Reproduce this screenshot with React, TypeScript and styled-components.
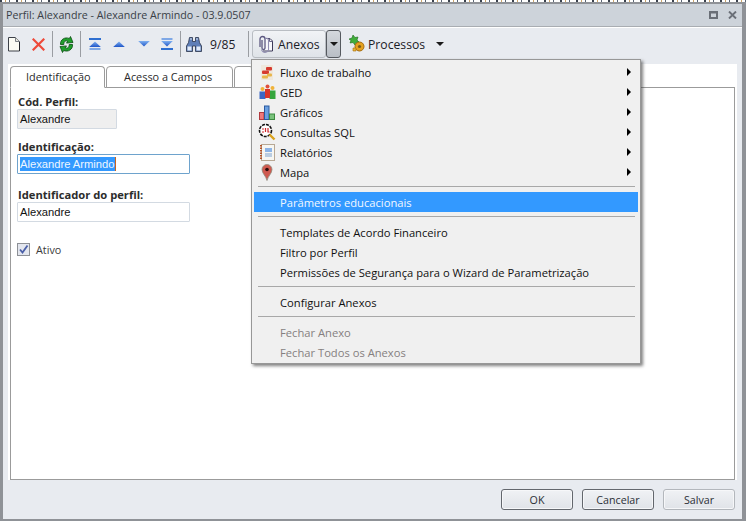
import { ReactNode } from "react";
import styled, { createGlobalStyle } from "styled-components";

const GlobalStyle = createGlobalStyle`
    html, body {
        margin: 0;
        padding: 0;
        width: 746px;
        height: 521px;
        overflow: hidden;
    }
    * {
        box-sizing: border-box;
    }
`;

const font = `"Open Sans", "Noto Sans", "Liberation Sans", sans-serif`;

const Desktop = styled.div`
    position: relative;
    width: 746px;
    height: 521px;
    display: flex;
    flex-direction: column;
    background: #8f9297;
    font-family: ${font};
    font-size: 11.2px;
    color: #1d1d1d;
`;

const BehindStrip = styled.div`
    height: 4px;
    flex: none;
    background:
        repeating-linear-gradient(90deg, #39414d 0 2px, #fff 2px 5px, #c9a36a 5px 6px, #fff 6px 9px, #5a6575 9px 10px, #fff 10px 16px) 0 0 / 100% 2px no-repeat,
        #8f9297;
`;

const Window = styled.div`
    flex: 1;
    margin: 0 4px 2px 3px;
    display: flex;
    flex-direction: column;
    background: #e8ebf0;
    min-height: 0;
`;

const TitleBar = styled.div`
    height: 23px;
    flex: none;
    display: flex;
    align-items: center;
    justify-content: space-between;
    padding: 0 5px 0 3px;
    background: #cdd3da;
    border-bottom: 1px solid #a9adb2;
    color: #3a3f47;
    font-size: 10.7px;
`;

const WindowControls = styled.div`
    display: flex;
    align-items: center;
    gap: 10px;
`;

const Toolbar = styled.div`
    height: 37px;
    flex: none;
    display: flex;
    align-items: center;
    border-top: 1px solid #fff;
    padding: 0 0 4px 5px;
`;

const ToolIcon = styled.span<{ $width: number; $gap?: number }>`
    width: ${(p) => p.$width}px;
    margin-right: ${(p) => p.$gap ?? 0}px;
    height: 24px;
    flex: none;
    display: flex;
    align-items: center;
    justify-content: center;
`;

const ToolDivider = styled.span<{ $left: number; $right: number }>`
    width: 1px;
    height: 26px;
    flex: none;
    margin: 0 ${(p) => p.$right}px 0 ${(p) => p.$left}px;
    background: #9a9da2;
`;

const Counter = styled.span`
    width: 27px;
    margin: 0 11px 0 8px;
    font-size: 12.2px;
    color: #1c2027;
    flex: none;
`;

const SplitMain = styled.div`
    width: 74px;
    height: 28px;
    flex: none;
    display: flex;
    align-items: center;
    gap: 5px;
    padding-left: 5px;
    border: 1px solid #b9bdc3;
    border-radius: 3px;
    background: linear-gradient(#f1f3f6, #dfe3e8);
    font-size: 12.2px;
    color: #1c2027;
`;

const SplitArrow = styled.div`
    width: 15px;
    height: 28px;
    flex: none;
    display: flex;
    align-items: center;
    justify-content: center;
    border: 1px solid #55595f;
    border-radius: 3px;
    background: linear-gradient(#d4d8dd, #b9bec5);
`;

const PlainTool = styled.div`
    margin-left: 7px;
    display: flex;
    align-items: center;
    gap: 2px;
    font-size: 12.2px;
    color: #1c2027;
`;

const Caret = styled.span<{ $gap?: number }>`
    width: 0;
    height: 0;
    margin-left: ${(p) => p.$gap ?? 0}px;
    border-left: 4px solid transparent;
    border-right: 4px solid transparent;
    border-top: 4px solid #1a1a1a;
`;

const TabSheet = styled.div`
    flex: 1;
    min-height: 0;
    margin: 0 5px;
    background: #fff;
    padding: 2px 2px 0;
    display: flex;
    flex-direction: column;
`;

const TabStrip = styled.div`
    height: 22px;
    flex: none;
    display: flex;
    position: relative;
    margin-bottom: -1px;
`;

const Tab = styled.div<{ $active?: boolean; $width: number }>`
    width: ${(p) => p.$width}px;
    margin-right: 1px;
    height: 22px;
    flex: none;
    display: flex;
    align-items: center;
    padding: 0 0 2px ${(p) => (p.$active ? 15 : 17)}px;
    font-size: 10.9px;
    background: #fff;
    border: 1px solid #9b9b9b;
    border-bottom: ${(p) => (p.$active ? "1px solid #fff" : "1px solid #9b9b9b")};
    border-radius: 4px 4px 0 0;
    color: #2a2a2a;
    white-space: nowrap;
    overflow: hidden;
`;

const TabPanel = styled.div`
    flex: 1;
    min-height: 0;
    border: 1px solid #9b9b9b;
    padding: 7px 0 0 6px;
    display: flex;
    flex-direction: column;
    align-items: flex-start;
`;

const FieldLabel = styled.label<{ $top?: number }>`
    margin: ${(p) => p.$top ?? 0}px 0 0 1px;
    height: 14px;
    line-height: 14px;
    font-weight: 700;
    font-size: 11.2px;
    color: #2c2c2c;
`;

const TextBox = styled.div<{ $width: number; $tone?: "readonly" | "focus" }>`
    width: ${(p) => p.$width}px;
    height: 20px;
    padding-left: 2px;
    display: flex;
    align-items: center;
    font-family: "Liberation Sans", Arial, sans-serif;
    font-size: 11.2px;
    color: #111;
    background: ${(p) => (p.$tone === "readonly" ? "#efefef" : "#fff")};
    border: 1px solid ${(p) => (p.$tone === "focus" ? "#6ea3cd" : "#d3dae2")};
    border-radius: 1px;
`;

const Selected = styled.span`
    background: #3399ff;
    color: #eef6ff;
    height: 14px;
    line-height: 14px;
    border-right: 1px solid #c8641e;
`;

const CheckRow = styled.div`
    margin-top: 20px;
    display: flex;
    align-items: center;
    gap: 6px;
    color: #3b3b3b;
    font-size: 10.8px;
`;

const CheckBox = styled.span`
    width: 13px;
    height: 13px;
    display: flex;
    align-items: center;
    justify-content: center;
    border: 1px solid #8d9096;
    background: #e3e6ee;
`;

const Footer = styled.div`
    height: 39px;
    flex: none;
    display: flex;
    justify-content: flex-end;
    align-items: flex-start;
    gap: 9px;
    padding: 9px 7px 0 0;
`;

const DialogButton = styled.div<{ $muted?: boolean }>`
    width: 72px;
    height: 21px;
    display: flex;
    align-items: center;
    justify-content: center;
    font-size: 10.7px;
    border: 1px solid ${(p) => (p.$muted ? "#b3b7bc" : "#63676d")};
    border-radius: 3px;
    background: linear-gradient(#f0f2f5, #e0e3e8);
    color: #2b2f36;
    box-shadow: inset 0 0 0 1px #f6f7f9;
`;

const Menu = styled.div`
    position: absolute;
    z-index: 2;
    left: 251px;
    top: 59px;
    width: 390px;
    height: 305px;
    padding: 2px;
    background: #f0f0f0;
    border: 1px solid #979797;
    box-shadow: 2px 2px 3px rgba(60, 60, 60, 0.65);
    color: #101010;
`;

const MenuItem = styled.div<{ $highlight?: boolean; $disabled?: boolean }>`
    height: 20px;
    display: flex;
    align-items: center;
    padding: 0 7px 0 3px;
    background: ${(p) => (p.$highlight ? "#3399ff" : "transparent")};
    color: ${(p) => (p.$highlight ? "#f2f8ff" : p.$disabled ? "#857f7f" : "#101010")};
`;

const MenuIcon = styled.span`
    width: 20px;
    height: 20px;
    flex: none;
    display: flex;
    align-items: center;
    justify-content: center;
`;

const MenuLabel = styled.span`
    margin-left: 3px;
    flex: 1;
`;

const MenuArrow = styled.span`
    width: 0;
    height: 0;
    border-top: 4px solid transparent;
    border-bottom: 4px solid transparent;
    border-left: 4px solid #000;
`;

const MenuRule = styled.div`
    height: 10px;
    padding: 4px 3px 0 4px;
    &::before {
        content: "";
        display: block;
        height: 1px;
        background: #a8a8a8;
    }
`;

const NewDocIcon = () => (
    <svg width="12" height="16" viewBox="0 0 12 16">
        <path d="M.5 1.500h7l4 4v9.500H.5z" fill="#fbfbf4" stroke="#3d4149" />
        <path d="M7.500 1.500v4h4" fill="#e4e4dc" stroke="#7b7f85" />
        <path d="M11.500 6v9" stroke="#23262c" />
    </svg>
);

const DeleteIcon = () => (
    <svg width="13" height="13" viewBox="0 0 13 13">
        <path d="M1.500 1.500l10 10M11.500 1.500l-10 10" stroke="#ee4a3a" strokeWidth="2.200" strokeLinecap="square" />
    </svg>
);

const RefreshIcon = () => (
    <svg width="15" height="17" viewBox="0 0 15 17">
        <path d="M1.500 8.500C1 3.500 6 .6 10.300 2.500L11.500.5l2.500 6-6.500.6 1.200-2C6.500 4.200 4.800 5.600 4.800 8.500z" fill="#1fa02b" stroke="#0a4a12" strokeWidth=".8" />
        <path d="M13.500 8.500c.5 5-4.500 7.900-8.800 6L3.500 16.500 1 10.500l6.500-.6-1.200 2c2.200.9 3.900-.5 3.900-3.400z" fill="#1fa02b" stroke="#0a4a12" strokeWidth=".8" />
    </svg>
);

const NavIcon = ({ dir, bar }: { dir: "up" | "down"; bar?: boolean }) => (
    <svg width="14" height="14" viewBox="0 0 14 14">
        <defs>
            <linearGradient id={`nav-${dir}`} x1="0" y1="0" x2="0" y2="1">
                <stop offset="0" stopColor="#7fb0f0" />
                <stop offset="1" stopColor="#1f55c8" />
            </linearGradient>
        </defs>
        {dir === "up" ? (
            <>
                {bar && <rect x="1" y="1" width="12" height="2" fill="#2f6fd0" />}
                <path d="M7 4.500l5.800 5.500H1.200z" fill={`url(#nav-${dir})`} />
                {bar && <path d="M1.500 12h11" stroke="#7fa8e6" strokeWidth="2" />}
            </>
        ) : (
            <>
                {bar && <path d="M1.500 2h11" stroke="#7fa8e6" strokeWidth="2" />}
                <path d="M1.200 4h11.600L7 9.500z" fill={`url(#nav-${dir})`} />
                {bar && <rect x="1" y="11" width="12" height="2" fill="#2f6fd0" />}
            </>
        )}
    </svg>
);

const BinocularsIcon = () => (
    <svg width="16" height="15" viewBox="0 0 16 15">
        <path d="M3.500.5h3v4h3v-4h3l1 5 2 3.500v5.500h-6V9h-3v5.500H.5V9l2-3.500z" fill="#5f7fb8" stroke="#28324a" strokeWidth=".8" />
        <rect x="1.500" y="9.500" width="4" height="4" fill="#e3ecf8" />
        <rect x="10.500" y="9.500" width="4" height="4" fill="#e3ecf8" />
        <path d="M4 2h2M10 2h2" stroke="#d7e1f2" />
    </svg>
);

const ClipIcon = () => (
    <svg width="15" height="20" viewBox="0 0 15 20">
        <path d="M7 4.500h5l2.500 2.500v10H5" fill="#f8f8fc" stroke="#3c3a58" />
        <path d="M11.500 4.500v3h3" fill="none" stroke="#6a688a" />
        <path d="M2 13V5a2.500 2.500 0 0 1 5 0v9a1.500 1.500 0 0 1-3 0V6" fill="none" stroke="#5c5880" strokeWidth="1.300" />
        <path d="M7 5a2 2 0 0 1 3.500 1v8a3.500 3.500 0 0 1-7 1.500" fill="none" stroke="#8f8cb0" strokeWidth="1.100" />
    </svg>
);

const ProcessIcon = () => (
    <svg width="18" height="18" viewBox="0 0 18 18">
        <path d="M1 4l3-1 1-3 2 2.500L10 2 9 5l2 2-3 .5L7 10 5 7.500 2 8l1-2.500z" fill="#3fae3a" stroke="#1c6a1c" strokeWidth=".6" />
        <circle cx="11.500" cy="11.500" r="4.500" fill="#e4a11f" stroke="#a56b0c" />
        <circle cx="11.500" cy="11.500" r="1.600" fill="#7a5a1a" />
        <path d="M5 13h3v3H5z" fill="#e8b63a" stroke="#a56b0c" strokeWidth=".6" />
    </svg>
);

const FlowIcon = () => (
    <svg width="16" height="17" viewBox="0 0 16 17">
        <path d="M2 1h12v15H2z" fill="#efe8dc" />
        <rect x="7" y="3" width="6" height="3.500" rx="1" fill="#d63a2e" />
        <rect x="3" y="6.500" width="7" height="3.500" rx="1" fill="#d63a2e" />
        <rect x="8" y="9.500" width="5" height="3" rx="1" fill="#e8b54a" />
        <rect x="3" y="11.500" width="6" height="3" rx="1" fill="#e8b54a" />
    </svg>
);

const GedIcon = () => (
    <svg width="17" height="16" viewBox="0 0 17 16">
        <circle cx="3.500" cy="5" r="2" fill="#f0b33a" />
        <path d="M.5 7.500h6V15h-6z" fill="#3b66c4" />
        <circle cx="13.500" cy="4" r="2" fill="#f0b33a" />
        <path d="M10.500 6.500h6V15h-6z" fill="#35a63e" />
        <circle cx="8.500" cy="2.500" r="2" fill="#e0503c" />
        <path d="M6 5h5v9H6z" fill="#d8342a" />
    </svg>
);

const ChartIcon = () => (
    <svg width="16" height="15" viewBox="0 0 16 15">
        <rect x=".5" y="7.500" width="4.500" height="7" fill="#f0787a" stroke="#b23a3e" />
        <rect x="5.500" y="1" width="4.500" height="13.500" fill="#6a9fe0" stroke="#2a5aa0" />
        <rect x="10.500" y="9" width="5" height="5.500" fill="#79c27c" stroke="#3c8a40" />
    </svg>
);

const SqlIcon = () => (
    <svg width="18" height="18" viewBox="0 0 18 18">
        <circle cx="7.500" cy="7.500" r="6" fill="#fff" stroke="#111" strokeWidth="1.600" strokeDasharray="3 1" />
        <path d="M4 6h2M6 9H4M7.500 5v4M10 5v4h1.500" stroke="#d0262a" strokeWidth="1.200" fill="none" />
        <path d="M11.500 11.500l5 5" stroke="#d9a21c" strokeWidth="2.400" />
    </svg>
);

const ReportIcon = () => (
    <svg width="15" height="17" viewBox="0 0 15 17">
        <rect x="1.500" y=".5" width="13" height="16" fill="#f6f6f2" stroke="#b8a894" />
        <path d="M1 1v15" stroke="#b3552a" strokeWidth="2" strokeDasharray="1.500 1" />
        <path d="M5 4h7v4H5z" fill="#8db4e6" />
        <path d="M5 10h7M5 12h7" stroke="#7fa3d0" />
    </svg>
);

const PinIcon = () => (
    <svg width="12" height="17" viewBox="0 0 12 17">
        <path d="M6 16.500C5 12 1 9.500 1 5.500a5 5 0 0 1 10 0C11 9.500 7 12 6 16.500z" fill="#cf5a50" stroke="#8f8f80" strokeWidth=".8" />
        <circle cx="6" cy="5.500" r="1.800" fill="#2a0d0d" />
    </svg>
);

const MaximizeIcon = () => (
    <svg width="9" height="8" viewBox="0 0 9 8">
        <path d="M0 0h9v8H0z M2 2.500v3.500h5V2.500z" fill="#6a6f77" fillRule="evenodd" />
    </svg>
);

const CloseIcon = () => (
    <svg width="9" height="8" viewBox="0 0 9 8">
        <path d="M1 .5L8 7.500M8 .5L1 7.500" stroke="#6a6f77" strokeWidth="1.900" />
    </svg>
);

const CheckMark = () => (
    <svg width="11" height="11" viewBox="0 0 11 11">
        <path d="M2 5.500l2.500 3L9.500 1.500" fill="none" stroke="#4a5fa8" strokeWidth="1.800" />
    </svg>
);

type MenuEntry =
    | { rule: true }
    | { label: string; icon?: ReactNode; sub?: boolean; highlight?: boolean; disabled?: boolean };

const menuEntries: MenuEntry[] = [
    { label: "Fluxo de trabalho", icon: <FlowIcon />, sub: true },
    { label: "GED", icon: <GedIcon />, sub: true },
    { label: "Gráficos", icon: <ChartIcon />, sub: true },
    { label: "Consultas SQL", icon: <SqlIcon />, sub: true },
    { label: "Relatórios", icon: <ReportIcon />, sub: true },
    { label: "Mapa", icon: <PinIcon />, sub: true },
    { rule: true },
    { label: "Parâmetros educacionais", highlight: true },
    { rule: true },
    { label: "Templates de Acordo Financeiro" },
    { label: "Filtro por Perfil" },
    { label: "Permissões de Segurança para o Wizard de Parametrização" },
    { rule: true },
    { label: "Configurar Anexos" },
    { rule: true },
    { label: "Fechar Anexo", disabled: true },
    { label: "Fechar Todos os Anexos", disabled: true },
];

export default function App() {
    return (
        <Desktop>
            <GlobalStyle />
            <BehindStrip />
            <Window>
                <TitleBar>
                    <span>Perfil: Alexandre - Alexandre Armindo - 03.9.0507</span>
                    <WindowControls>
                        <MaximizeIcon />
                        <CloseIcon />
                    </WindowControls>
                </TitleBar>
                <Toolbar>
                    <ToolIcon $width={12} $gap={12}><NewDocIcon /></ToolIcon>
                    <ToolIcon $width={13}><DeleteIcon /></ToolIcon>
                    <ToolDivider $left={7} $right={6} />
                    <ToolIcon $width={15}><RefreshIcon /></ToolIcon>
                    <ToolDivider $left={6} $right={7} />
                    <ToolIcon $width={14} $gap={10}><NavIcon dir="up" bar /></ToolIcon>
                    <ToolIcon $width={14} $gap={11}><NavIcon dir="up" /></ToolIcon>
                    <ToolIcon $width={14} $gap={9}><NavIcon dir="down" /></ToolIcon>
                    <ToolIcon $width={14}><NavIcon dir="down" bar /></ToolIcon>
                    <ToolDivider $left={6} $right={5} />
                    <ToolIcon $width={16}><BinocularsIcon /></ToolIcon>
                    <Counter>9/85</Counter>
                    <ToolDivider $left={0} $right={3} />
                    <SplitMain>
                        <ClipIcon />
                        Anexos
                    </SplitMain>
                    <SplitArrow><Caret /></SplitArrow>
                    <PlainTool>
                        <ProcessIcon />
                        Processos
                        <Caret $gap={9} />
                    </PlainTool>
                </Toolbar>
                <TabSheet>
                    <TabStrip>
                        <Tab $active $width={95}>Identificação</Tab>
                        <Tab $width={127}>Acesso a Campos</Tab>
                        <Tab $width={20} />
                    </TabStrip>
                    <TabPanel>
                        <FieldLabel>Cód. Perfil:</FieldLabel>
                        <TextBox $width={100} $tone="readonly">Alexandre</TextBox>
                        <FieldLabel $top={11}>Identificação:</FieldLabel>
                        <TextBox $width={173} $tone="focus"><Selected>Alexandre Armindo</Selected></TextBox>
                        <FieldLabel $top={14}>Identificador do perfil:</FieldLabel>
                        <TextBox $width={173}>Alexandre</TextBox>
                        <CheckRow>
                            <CheckBox><CheckMark /></CheckBox>
                            Ativo
                        </CheckRow>
                    </TabPanel>
                </TabSheet>
                <Footer>
                    <DialogButton>OK</DialogButton>
                    <DialogButton>Cancelar</DialogButton>
                    <DialogButton $muted>Salvar</DialogButton>
                </Footer>
            </Window>
            <Menu>
                {menuEntries.map((entry, index) =>
                    "rule" in entry ? (
                        <MenuRule key={index} />
                    ) : (
                        <MenuItem key={index} $highlight={entry.highlight} $disabled={entry.disabled}>
                            <MenuIcon>{entry.icon}</MenuIcon>
                            <MenuLabel>{entry.label}</MenuLabel>
                            {entry.sub && <MenuArrow />}
                        </MenuItem>
                    )
                )}
            </Menu>
        </Desktop>
    );
}
